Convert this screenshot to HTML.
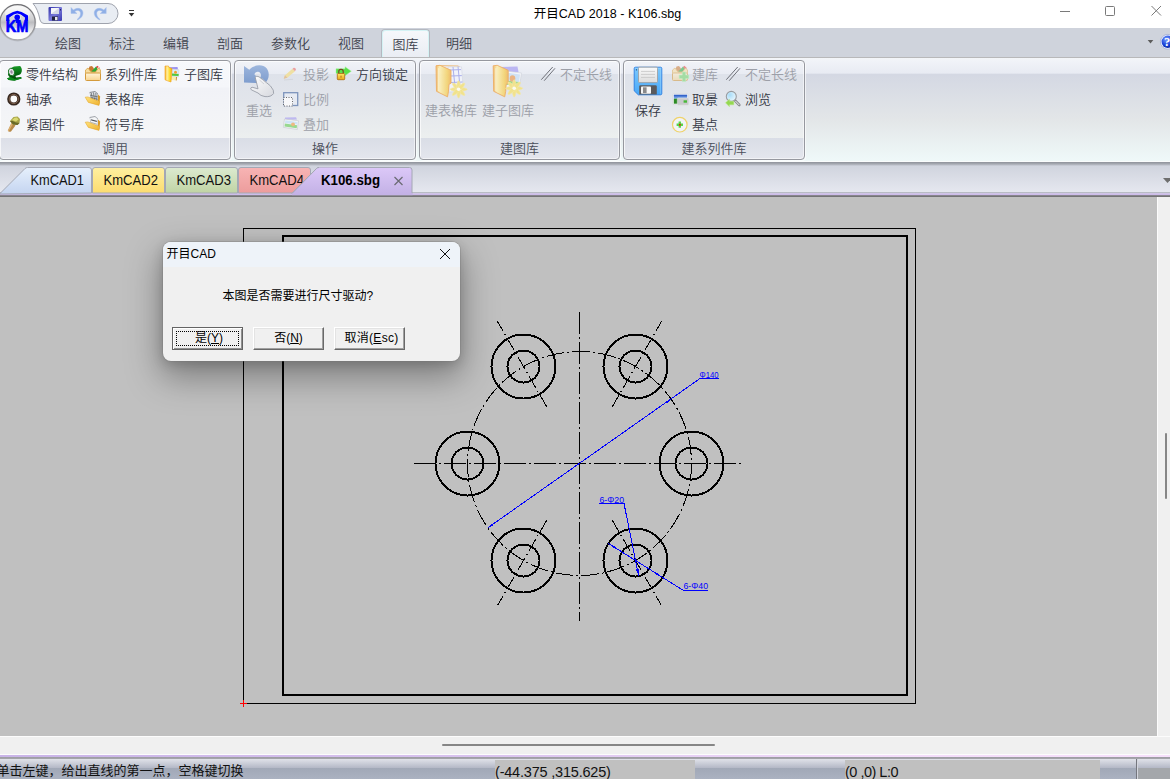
<!DOCTYPE html>
<html lang="zh-CN">
<head>
<meta charset="utf-8">
<title>开目CAD 2018 - K106.sbg</title>
<style>
*{box-sizing:border-box;margin:0;padding:0}
html,body{width:1170px;height:779px;overflow:hidden;background:#c0c0c0}
body{position:relative;font-family:"Liberation Sans","Noto Sans CJK SC",sans-serif;font-size:13px;color:#3c3c46}
.abs{position:absolute}
#titlebar{left:0;top:0;width:1170px;height:28px;background:#fff}
#title{left:0;top:5px;width:1215px;text-align:center;font-size:12.500px;color:#000;line-height:18px;letter-spacing:.05px}
#tabrow{left:0;top:28px;width:1170px;height:30px;background:#cfd3dc}
.rtab{font-weight:350;position:absolute;top:30px;height:28px;line-height:28px;font-size:13px;color:#3e424d;text-align:center}
.rtab.on{top:29px;height:30px;line-height:30px;background:linear-gradient(#f6f8fb,#e9ecf3);border:1px solid #b4b8c0;border-bottom:none;border-radius:4px 4px 0 0;box-shadow:inset 1px 1px 0 #d4f2f4,inset -1px 0 0 #d4f2f4}
#ribbon{left:0;top:57px;width:1170px;height:105px;background:linear-gradient(#f3f5f9 0,#e8ebf3 15px,#d4d8e3 16.500px,#e3e6e8 62px,#eff9f9 100%);border-top:1px solid #b8b8ba;border-bottom:1px solid #fafcfc}
.grp{position:absolute;top:60px;height:100px;border:1px solid #96989f;border-radius:4px;background:linear-gradient(#f1f3f8 0,#e9ecf3 12.500px,#dee2ea 13px,#e2e5eb 40px,#ecefef 76.500px,#d9dde6 77px,#e4e6ed 100%);box-shadow:inset 1px 1px 0 rgba(255,255,255,.7),inset -1px -1px 0 rgba(255,255,255,.5),1px 1px 0 rgba(255,255,255,.6)}
.glabel{font-weight:350;position:absolute;left:0;right:0;bottom:-1px;height:21px;line-height:20px;text-align:center;font-size:13px;color:#4a4e5a}
.it{position:absolute;font-size:13px;line-height:16px;white-space:nowrap;color:#343844;font-weight:350}
.it.dis{color:#9c9fa8}
#doctabs{left:0;top:162px;width:1170px;height:35px;background:linear-gradient(#8e929a 0,#a6aab2 2px,#b9bdc6 3px,#d0d4de 4px,#e6e8f0 31px)}
#canvas{left:0;top:197px;width:1157px;height:539px;background:#c0c0c0}
#vscroll{left:1157px;top:197px;width:13px;height:558px;background:#f0f0f0;border-left:1px solid #fcfcfc}
#hscroll{left:0;top:736px;width:1170px;height:19px;background:#f0f0f0;border-top:1px solid #fcfcfc;border-bottom:1px solid #fcfcfc}
#status{left:0;top:757px;width:1170px;height:22px;background:linear-gradient(#9c9ca2 0,#a4a4aa 1.500px,#e0e2e9 2px,#b6bac8 10.500px,#a1a8b7 11px,#abb2c1 100%)}
.st{color:#111;line-height:18px;white-space:nowrap}
.btn{font-family:'Liberation Sans','Noto Sans CJK SC',sans-serif;background:#f0f0f0;border:1px solid;border-color:#fff #696969 #696969 #fff;box-shadow:inset -1px -1px 0 #a0a0a0,inset 1px 1px 0 #e3e3e3;font-size:12px;color:#000;text-align:center;line-height:20px;white-space:nowrap}
.btn.def{border-color:#646464;box-shadow:inset 1px 1px 0 #fff,inset -1px -1px 0 #909090}
.btn .focus{position:absolute;left:3px;top:3px;right:3px;bottom:3px;border:1px dotted #000}
.btn span{position:relative}
</style>
</head>
<body>
<div id="titlebar" class="abs"></div>
<div id="title" class="abs">开目CAD 2018 - K106.sbg</div>
<div id="tabrow" class="abs"></div>
<div class="rtab" style="left:41px;width:54px">绘图</div>
<div class="rtab" style="left:95px;width:54px">标注</div>
<div class="rtab" style="left:149px;width:54px">编辑</div>
<div class="rtab" style="left:203px;width:54px">剖面</div>
<div class="rtab" style="left:257px;width:67px">参数化</div>
<div class="rtab" style="left:324px;width:54px">视图</div>
<div class="rtab on" style="left:381px;width:49px">图库</div>
<div class="rtab" style="left:432px;width:54px">明细</div>
<!--TITLEBAR_START--><svg class="abs" style="left:0;top:0" width="1170" height="60" viewBox="0 0 1170 60">
<defs>
<linearGradient id="lg1" x1="0" y1="0" x2="0" y2="1"><stop offset="0" stop-color="#f4f4f4"/><stop offset=".42" stop-color="#cfcfd1"/><stop offset=".5" stop-color="#bcbcc0"/><stop offset=".72" stop-color="#e6e6e8"/><stop offset="1" stop-color="#ffffff"/></linearGradient>
<linearGradient id="lgb" x1="0" y1="0" x2="0" y2="1"><stop offset="0" stop-color="#6e6e72"/><stop offset="1" stop-color="#a8a8ac"/></linearGradient>
<linearGradient id="fl" x1="0" y1="0" x2="1" y2="1"><stop offset="0" stop-color="#3030a8"/><stop offset=".5" stop-color="#7878d8"/><stop offset="1" stop-color="#3838b0"/></linearGradient>
<radialGradient id="hp" cx=".4" cy=".3" r=".8"><stop offset="0" stop-color="#7aa0ff"/><stop offset=".6" stop-color="#1840d8"/><stop offset="1" stop-color="#0a208c"/></radialGradient>
</defs>
<!-- QAT pill -->
<path d="M33 3.500 H108 A10 10 0 0 1 108 23.500 H44 Q41 23.500 40 20 Q38 9 33 3.500 Z" fill="#e9edf3" stroke="#9fa3ad" stroke-width="1"/>
<!-- logo -->
<circle cx="17.600" cy="22.600" r="18.800" fill="#000" opacity=".10"/>
<circle cx="17.600" cy="22.300" r="17.600" fill="url(#lg1)" stroke="url(#lgb)" stroke-width="1.300"/>
<ellipse cx="17.600" cy="13" rx="12.500" ry="7" fill="#fff" opacity=".55"/>
<ellipse cx="17.600" cy="33.500" rx="12" ry="5.500" fill="#fff" opacity=".7"/>
<path d="M6.200 15.400 L13 12 L17.300 10.800 L21.600 12 L28 15.400 V21 H24.800 V17.600 L20.800 14.600 L17.300 13.600 L13.800 14.600 L9.500 17.600 V21 H6.200 Z" fill="#0000ff"/>
<path d="M9.600 17.700 L14.300 15 L13.400 19.800 L11 21.500 L9.600 20.500 Z M24.700 17.700 L20.200 15 L21 19.800 L23.300 21.500 L24.700 20.500 Z" fill="#d2d2d6"/>
<circle cx="17.200" cy="17.300" r="2.800" fill="#0000ff"/>
<rect x="15.800" y="19" width="2.800" height="4" fill="#0000ff"/>
<text x="5.700" y="32.100" font-family="'Liberation Sans',sans-serif" font-weight="bold" font-size="16.500" fill="#0000ff" stroke="#0000ff" stroke-width=".7" textLength="22.800" lengthAdjust="spacingAndGlyphs">KM</text>
<!-- save -->
<rect x="48.500" y="7" width="13.500" height="14" rx="1" fill="url(#fl)"/>
<rect x="51" y="8" width="8" height="6" fill="#f4f6fa"/>
<path d="M51 14 L59 8 V14 Z" fill="#c8ccdc" opacity=".7"/>
<rect x="52" y="16.500" width="6" height="4" fill="#20203a"/>
<rect x="55" y="17" width="2.500" height="3.200" fill="#e8e8f0"/>
<rect x="60" y="9" width="1" height="1.500" fill="#20206a"/>
<!-- undo -->
<path d="M71 7.500 V13.500 H77 L74.800 11.400 C77.500 9.500 80.500 10.500 80.500 13.500 C80.500 16 79 18 77 19.600 L78 19.800 C81.500 18 83 15.500 83 13 C83 8.500 77.500 6.800 73.400 9.900 Z" fill="#8fafe6" stroke="#a9c1ec" stroke-width=".5"/>
<!-- redo -->
<path d="M106.200 7.500 V13.500 H100.200 L102.400 11.400 C99.700 9.500 96.700 10.500 96.700 13.500 C96.700 16 98.200 18 100.200 19.600 L99.200 19.800 C95.700 18 94.200 15.500 94.200 13 C94.200 8.500 99.700 6.800 103.800 9.900 Z" fill="#8fafe6" stroke="#a9c1ec" stroke-width=".5"/>
<!-- dropdown -->
<rect x="129" y="10" width="5" height="1" fill="#333"/>
<path d="M128.700 13 H134.300 L131.500 16.500 Z" fill="#333"/>
<!-- window controls -->
<rect x="1060" y="11" width="10" height="1" fill="#7a7a7a"/>
<rect x="1105.500" y="6.500" width="9" height="9" rx="1" fill="none" stroke="#7a7a7a" stroke-width="1"/>
<path d="M1151.500 6 L1161 15.500 M1161 6 L1151.500 15.500" stroke="#7a7a7a" stroke-width="1" fill="none"/>
<!-- ribbon right -->
<path d="M1147.700 40 H1153.300 L1150.500 43.400 Z" fill="#5c5c5c"/>
<circle cx="1167.800" cy="41.800" r="7.400" fill="#eef2ff" stroke="#98a4d0" stroke-width=".7"/>
<circle cx="1167.800" cy="41.800" r="6.200" fill="url(#hp)"/>
<text x="1164" y="46.300" font-family="'Liberation Serif',serif" font-weight="bold" font-size="12.500" fill="#fff">?</text>
</svg>
<!--TITLEBAR_END-->
<div id="ribbon" class="abs"></div>
<div class="grp" style="left:-1px;width:232px;background:linear-gradient(#f7f8fb 0,#f5f6fa 26px,#f1f2f7 27px,#f5f6f7 76.500px,#dcdfe8 77px,#e7e9ef 100%)"><div class="glabel">调用</div></div>
<div class="grp" style="left:234px;width:182px"><div class="glabel">操作</div></div>
<div class="grp" style="left:419px;width:201px"><div class="glabel">建图库</div></div>
<div class="grp" style="left:623px;width:182px"><div class="glabel">建系列件库</div></div>
<!-- group 1 items -->
<div class="it" style="left:26px;top:67px">零件结构</div>
<div class="it" style="left:26px;top:92px">轴承</div>
<div class="it" style="left:26px;top:117px">紧固件</div>
<div class="it" style="left:105px;top:67px">系列件库</div>
<div class="it" style="left:105px;top:92px">表格库</div>
<div class="it" style="left:105px;top:117px">符号库</div>
<div class="it" style="left:184px;top:67px">子图库</div>
<!-- group 2 items -->
<div class="it dis" style="left:246px;top:103px">重选</div>
<div class="it dis" style="left:303px;top:67px">投影</div>
<div class="it dis" style="left:303px;top:92px">比例</div>
<div class="it dis" style="left:303px;top:117px">叠加</div>
<div class="it" style="left:356px;top:67px">方向锁定</div>
<!-- group 3 items -->
<div class="it dis" style="left:425px;top:103px">建表格库</div>
<div class="it dis" style="left:482px;top:103px">建子图库</div>
<div class="it dis" style="left:560px;top:67px">不定长线</div>
<!-- group 4 items -->
<div class="it" style="left:635px;top:103px">保存</div>
<div class="it dis" style="left:692px;top:67px">建库</div>
<div class="it dis" style="left:745px;top:67px">不定长线</div>
<div class="it" style="left:692px;top:92px">取景</div>
<div class="it" style="left:745px;top:92px">浏览</div>
<div class="it" style="left:692px;top:117px">基点</div>
<!--ICONS_START--><svg class="abs" style="left:0;top:58px" width="810" height="104" viewBox="0 58 810 104">
<defs>
<linearGradient id="gcy" x1="0" y1="0" x2="0" y2="1"><stop offset="0" stop-color="#1a9a28"/><stop offset=".5" stop-color="#066a12"/><stop offset="1" stop-color="#03400a"/></linearGradient>
<linearGradient id="fold" x1="0" y1="0" x2="1" y2="1"><stop offset="0" stop-color="#ffe27a"/><stop offset="1" stop-color="#eeb030"/></linearGradient>
<linearGradient id="foldv" x1="0" y1="0" x2="1" y2="0"><stop offset="0" stop-color="#f8b020"/><stop offset=".3" stop-color="#fff0a0"/><stop offset=".7" stop-color="#ffd820"/><stop offset="1" stop-color="#f0a818"/></linearGradient>
<linearGradient id="box" x1="0" y1="0" x2="0" y2="1"><stop offset="0" stop-color="#fff4d8"/><stop offset="1" stop-color="#f8d490"/></linearGradient>
</defs>
<!-- 零件结构 -->
<g>
<path d="M9 80 L14.500 80.500 L21.500 78.500 L21 77 L16 77.500 L15.500 76 L20 74.500 C22.500 72.500 22.500 68 20 66 L14 66.500 L9 69 L8 75 L10 77.500 L7 78.500 Z" fill="url(#gcy)"/>
<path d="M7 78.300 L10.500 77 L15 79 L21.500 77.200 L21.500 78.600 L14.500 80.700 L8.500 80 Z" fill="#0b8a1a"/>
<ellipse cx="11.500" cy="72" rx="3" ry="3.800" fill="#e8e8ec" stroke="#0a6a14" stroke-width=".8" transform="rotate(-15 11.500 72)"/>
<ellipse cx="11.500" cy="72" rx="1.200" ry="1.800" fill="#9a8aa0" transform="rotate(-15 11.500 72)"/>
</g>
<!-- 轴承 -->
<circle cx="13.800" cy="99" r="5" fill="#fdfdfd" stroke="#35261e" stroke-width="3.200"/>
<circle cx="13.800" cy="99" r="4.600" fill="none" stroke="#8a6a54" stroke-width=".9"/>
<!-- 紧固件 -->
<path d="M11.500 123 L15.500 125.500 L11 131.500 Q9 132.500 7.800 130.800 Z" fill="#b88a48"/>
<path d="M11.500 123 L13 124 L8.800 131.300 Q8 131 7.800 130.800 Z" fill="#dcb070"/>
<path d="M10 121 L13.500 117 L17.500 116.500 L20 119 L19.500 123 L17.500 125 L13 124.500 Z" fill="#a8a448"/>
<path d="M12 120 L14.500 117.800 L17 117.500 L18.500 119.500 L16 121.500 Z" fill="#d8d870"/>
<path d="M10 121 L13 124.500 L17.500 125 L19.500 123 L16 122.500 L12.500 121 Z" fill="#6a6a28"/>
<!-- 系列件库 -->
<path d="M88 71 L89.500 66.500 L92 66 L94 68.500 L93.500 72 Z" fill="#c87832"/>
<path d="M91 72 L96 66.500 L98.500 68 L95.500 73 Z" fill="#28a838"/>
<path d="M96 67 L97.500 65.800 L99.800 68 L98.800 70 Z" fill="#e84040"/>
<path d="M97 68.200 L98.500 67 L99.500 68.500 L98.300 69.600 Z" fill="#fff"/>
<path d="M85.500 70 L88 68 L91 72 L95.500 72 L98.500 68 L100.500 70 L100.500 73.500 H85.500 Z" fill="#f6dca0" stroke="#d8a448" stroke-width=".8"/>
<rect x="85.500" y="73" width="15" height="7.500" rx="1" fill="url(#box)" stroke="#d49a3c" stroke-width="1"/>
<!-- 表格库 -->
<g>
<path d="M89.500 92 L95 91 L98 93.500 L98.500 103 L91 100 Z" fill="#8a8e94"/>
<path d="M90 93 L95 92 L97.500 94 L97.800 101.500 L91.500 99 Z" fill="#dfe2e6"/>
<path d="M91.300 93 L92.500 99.500 M93.500 92.500 L94.500 100.300 M95.800 93 L96.300 101 M90.300 95.300 L97.600 96.800 M90.800 97.500 L97.700 99.300" stroke="#555a60" stroke-width=".7" fill="none"/>
<path d="M98 94.500 L100.200 96.500 L99.300 104.500 L98 103 Z" fill="#d89a28"/>
<path d="M85.200 97.200 L87.800 96.900 L99.600 101.400 L99 105.400 L88.300 102.400 Z" fill="url(#fold)" stroke="#e0a020" stroke-width=".5"/>
</g>
<!-- 符号库 -->
<g transform="translate(0 25)">
<path d="M89.500 92 L95 91 L98 93.500 L98.500 103 L91 100 Z" fill="#a0a4aa"/>
<path d="M90 93 L95 92 L97.500 94 L97.800 101.500 L91.500 99 Z" fill="#f4f5f7"/>
<path d="M91 94.200 L96.800 95.800 L96.900 97 L91.200 95.500 Z" fill="#50545a"/>
<path d="M91.300 97.500 L97.300 99.300" stroke="#8a8e94" stroke-width=".7" fill="none"/>
<path d="M98 94.500 L100.200 96.500 L99.300 104.500 L98 103 Z" fill="#d89a28"/>
<path d="M85.200 97.200 L87.800 96.900 L99.600 101.400 L99 105.400 L88.300 102.400 Z" fill="url(#fold)" stroke="#e0a020" stroke-width=".5"/>
</g>
<!-- 子图库 -->
<g>
<path d="M169 67.200 L177.500 67 L178 69.500 L169 70 Z" fill="#9a90f0"/>
<path d="M172 69 L179 69.800 L178.500 77 L172 76.500 Z" fill="#d8ecf8" stroke="#c8ccd4" stroke-width=".5"/>
<path d="M172 73.500 L178.700 74 L178.500 76 L172 75.800 Z" fill="#50c840"/>
<circle cx="175.500" cy="72.300" r="1.500" fill="#f0a030"/>
<path d="M171 76.500 L177 77 L176.500 80.500 L171 80 Z" fill="#f8eeb0"/>
<path d="M176 77 L177 77.100 L176.600 80.500 L175.800 80.400 Z" fill="#c88838"/>
<path d="M165 66 L168.500 66 L169 67.500 L172 68.500 L171.500 75 L171 82 L168 81 L165 79.800 Z" fill="url(#foldv)" stroke="#f0a020" stroke-width=".6"/>
</g>
<defs>
<linearGradient id="arw" x1="0" y1="0" x2="0" y2="1"><stop offset="0" stop-color="#9db6dd"/><stop offset="1" stop-color="#7d9ccd"/></linearGradient>
<linearGradient id="hand" x1="0" y1="0" x2="1" y2="1"><stop offset="0" stop-color="#ffffff"/><stop offset="1" stop-color="#d6d8de"/></linearGradient>
<linearGradient id="fdis" x1="0" y1="0" x2="1" y2="0"><stop offset="0" stop-color="#f2b860"/><stop offset=".25" stop-color="#fbeeb4"/><stop offset=".75" stop-color="#f5d470"/><stop offset="1" stop-color="#f0b860"/></linearGradient>
<linearGradient id="flp" x1="0" y1="0" x2="0" y2="1"><stop offset="0" stop-color="#7cc8fc"/><stop offset="1" stop-color="#48a8f8"/></linearGradient>
<linearGradient id="lbl" x1="0" y1="0" x2="0" y2="1"><stop offset="0" stop-color="#fafafa"/><stop offset="1" stop-color="#dcdcdc"/></linearGradient>
<linearGradient id="gold" x1="0" y1="0" x2="0" y2="1"><stop offset="0" stop-color="#ffe868"/><stop offset="1" stop-color="#e8a818"/></linearGradient>
<linearGradient id="sky" x1="0" y1="0" x2="0" y2="1"><stop offset="0" stop-color="#1c4cc0"/><stop offset="1" stop-color="#9cc4f4"/></linearGradient>
<radialGradient id="lens" cx=".35" cy=".35" r=".8"><stop offset="0" stop-color="#a8dcf8"/><stop offset="1" stop-color="#f4fbff"/></radialGradient>
</defs>
<!-- 重选 -->
<path d="M244 66 L249.300 69.800 C253 65 262.500 63.200 266.800 68.500 C270 73 269.300 79.500 264.500 83.500 L258 80 C261.500 78 262 73.500 259 72 C256.800 71 255 72.500 254.300 74.300 L258.500 78.500 L257 83 L244 82.500 Z" fill="url(#arw)"/>
<path d="M255.200 77.300 Q256.500 75.300 259 76.800 L266.500 82.600 L270.500 86 Q274.500 90.500 273.600 93.500 Q271 97.200 265 96.600 Q260.500 96 258 93 L251.300 89.800 Q249.600 87.800 252 87.200 L258 88.800 L257 84.500 Z" fill="url(#hand)" stroke="#9a9ea8" stroke-width=".9"/>
<path d="M259.500 80 L264 84 M262 78.600 L267 83.500" stroke="#c4c6cc" stroke-width=".7" fill="none"/>
<!-- 投影 pencil -->
<path d="M283.700 78.800 L285 75.300 L292.500 68.800 L295 71.200 L287.300 77.800 Z" fill="#efe0a4"/>
<path d="M292.500 68.800 L293.800 67.800 Q295.500 67.500 296 69.500 L295 71.200 Z" fill="#eba0a0"/>
<path d="M283.700 78.800 L285 75.300 L287.300 77.800 Z" fill="#e0c0a0"/>
<path d="M284 80 L293 79.300" stroke="#d4d6dc" stroke-width="1" fill="none"/>
<!-- 比例 -->
<rect x="283.700" y="92.700" width="14" height="12.800" fill="#e6eaf2" stroke="#7d94bc" stroke-width="1.300"/>
<rect x="283.500" y="97.500" width="9" height="8.500" fill="#f8f8fa" stroke="#4a4a4a" stroke-width=".8" stroke-dasharray="1 1.500"/>
<!-- 叠加 -->
<path d="M285 117.500 L296 117.300 L297 119.500 L285 120 Z" fill="#b4acf0" opacity=".8"/>
<path d="M284.500 119 L298.500 120.800 L297.300 129.500 L283.300 127.300 Z" fill="#f4f6f8" stroke="#c4c6cc" stroke-width=".6"/>
<path d="M285.300 120.300 L297.600 121.900 L297.200 124.500 L285 123 Z" fill="#cfe4f6"/>
<path d="M284.900 123.600 L297.100 125.200 L296.700 128.300 L284.400 126.400 Z" fill="#98d890"/>
<circle cx="293" cy="124.300" r="1.900" fill="#eeb880"/>
<!-- 方向锁定 -->
<path d="M336 68.800 H345 V66.800 L351.300 71.200 L345 75.700 V73.500 H336 Z" fill="#58e048" stroke="#a8f0a0" stroke-width=".5"/>
<path d="M338.800 74 V71.500 Q338.800 69.200 341 69.200 Q343.200 69.200 343.200 71.500 V74" fill="none" stroke="#7a3a22" stroke-width="1.100"/>
<rect x="337.300" y="73.500" width="7.400" height="6.200" rx=".8" fill="url(#gold)" stroke="#a8680c" stroke-width=".8"/>
<rect x="340.300" y="75.700" width="1.400" height="2" fill="#c08a20"/>
<!-- 建表格库 -->
<g opacity=".9">
<path d="M436.500 65.600 L458 66 L460.500 67.500" fill="none" stroke="#f0b468" stroke-width="1"/>
<path d="M448 67 L461.500 66.800 L463.500 91 L449 92 Z" fill="#f2f4fb" stroke="#d0d4e0" stroke-width=".6"/>
<path d="M450 70 L461 69.600 M450.500 76 L461.800 75.600 M451 82.500 L462.500 82 M453 67 L455.500 92 M458 66.500 L460.500 92" stroke="#a6abec" stroke-width="1" fill="none"/>
<g transform="translate(436 65.300)"><path d="M0 0.500 L4 0 L15 5 L15 18 L13 19 L12.500 26 L11.500 31.500 L0.500 26 Z" fill="url(#fdis)" stroke="#eea858" stroke-width=".9" stroke-linejoin="round"/><path d="M2.200 3 L3.200 2.600 L3.200 26 L2.200 25.600 Z" fill="#fff8d8" opacity=".8"/></g>
<g transform="translate(458.600 89.300)"><g fill="#f3e283" stroke="#f7eaa0" stroke-width=".6"><ellipse cx="0" cy="0" rx="8.600" ry="2"/><ellipse cx="0" cy="0" rx="8.600" ry="2" transform="rotate(45)"/><ellipse cx="0" cy="0" rx="8.600" ry="2" transform="rotate(90)"/><ellipse cx="0" cy="0" rx="8.600" ry="2" transform="rotate(135)"/></g><circle r="1.800" fill="#fffdf0"/></g>
</g>
<!-- 建子图库 -->
<g opacity=".9">
<path d="M500 67 L517.500 66.500 L518.500 72 L500.500 73 Z" fill="#b6b0f2"/>
<path d="M503 70.500 L521.500 73 L519 90 L503 87 Z" fill="#f5f7fa" stroke="#ccd0d8" stroke-width=".6"/>
<path d="M505 72.300 L520 74.400 L519 82 L505 80.500 Z" fill="#cfe3f6"/>
<path d="M505 80.500 L519 82 L518.300 86.500 L505 84.500 Z" fill="#98d884"/>
<ellipse cx="512.500" cy="78.500" rx="2.800" ry="3.300" fill="#ecb078"/>
<g transform="translate(493.200 65.300)"><path d="M0 0.500 L4 0 L15 5 L15 18 L13 19 L12.500 26 L11.500 31.500 L0.500 26 Z" fill="url(#fdis)" stroke="#eea858" stroke-width=".9" stroke-linejoin="round"/><path d="M2.200 3 L3.200 2.600 L3.200 26 L2.200 25.600 Z" fill="#fff8d8" opacity=".8"/></g>
<g transform="translate(514.200 88.300)"><g fill="#f3e283" stroke="#f7eaa0" stroke-width=".6"><ellipse cx="0" cy="0" rx="8.600" ry="2"/><ellipse cx="0" cy="0" rx="8.600" ry="2" transform="rotate(45)"/><ellipse cx="0" cy="0" rx="8.600" ry="2" transform="rotate(90)"/><ellipse cx="0" cy="0" rx="8.600" ry="2" transform="rotate(135)"/></g><circle r="1.800" fill="#fffdf0"/></g>
</g>
<!-- 不定长线 x2 (disabled) -->
<path d="M541.300 79.700 L552.700 67 M544.200 80.700 L555 68.300" stroke="#6e7078" stroke-width="1" fill="none"/>
<path d="M726.300 79.700 L737.700 67 M729.200 80.700 L740 68.300" stroke="#6e7078" stroke-width="1" fill="none"/>
<!-- 保存 -->
<path d="M635.500 67.200 H660.500 Q661.800 67.200 661.800 68.500 V93.500 Q661.800 94.800 660.500 94.800 H638.300 L634.200 90.800 V68.500 Q634.200 67.200 635.500 67.200 Z" fill="url(#flp)" stroke="#2a7ce0" stroke-width=".9"/>
<path d="M635.300 68.300 H660.700 V93.700" fill="none" stroke="#a8dcff" stroke-width=".6" opacity=".8"/>
<rect x="638.500" y="67.200" width="19" height="15.400" rx="1.200" fill="url(#lbl)" stroke="#9c9c9c" stroke-width=".8"/>
<path d="M641 71.400 H655 M641 74.400 H655 M641 77.400 H655" stroke="#c4c4c4" stroke-width=".8"/>
<path d="M639.200 86.500 Q639.200 85.200 640.500 85.200 H655.500 Q656.800 85.200 656.800 86.500 V94.600 H639.200 Z" fill="#5a5a5c"/>
<rect x="641" y="86.500" width="10" height="7.200" rx=".8" fill="#f6f6f6"/>
<rect x="643" y="87.300" width="3.600" height="5.800" fill="#8a8a8a"/>
<rect x="635.900" y="69" width=".9" height="1.600" fill="#2a5890"/>
<!-- 建库 (disabled) -->
<g opacity=".55">
<path d="M675 71 L676.500 66.500 L679 66 L681 68.500 L680.500 72 Z" fill="#c87832"/>
<path d="M678 72 L683 66.500 L685.500 68 L682.500 73 Z" fill="#28a838"/>
<path d="M683 67 L684.500 65.800 L686.800 68 L685.800 70 Z" fill="#e84040"/>
<path d="M672.500 70 L675 68 L678 72 L682.500 72 L685.500 68 L687.500 70 L687.500 73.500 H672.500 Z" fill="#f6dca0" stroke="#d8a448" stroke-width=".8"/>
<rect x="672.500" y="73" width="15" height="7.500" rx="1" fill="url(#box)" stroke="#d49a3c" stroke-width="1"/>
</g>
<path d="M682.300 72 H685.700 V75.100 H688.800 V78.500 H685.700 V81.600 H682.300 V78.500 H679.200 V75.100 H682.300 Z" fill="#a4dca4" stroke="#c4ecc4" stroke-width=".6"/>
<!-- 取景 -->
<rect x="672.700" y="93.600" width="15.600" height="11" rx="1.200" fill="#fafafa" stroke="#d0d2d6" stroke-width=".6"/>
<rect x="673.800" y="94.700" width="13.400" height="4.200" fill="url(#sky)"/>
<rect x="673.800" y="98.700" width="5" height="5" fill="#2c8a24"/>
<rect x="677.300" y="98" width="11.500" height="7.200" rx="1" fill="#c9cacc" stroke="#e8e8ea" stroke-width=".5"/>
<rect x="683.600" y="100.300" width="3.400" height="2.400" fill="#48b838"/>
<!-- 基点 -->
<circle cx="679.800" cy="124.700" r="7.300" fill="#f2f3f7" stroke="#efd36a" stroke-width="1.200"/>
<path d="M678.600 121.600 H681 V123.500 H683 V125.900 H681 V127.800 H678.600 V125.900 H676.600 V123.500 H678.600 Z" fill="#58d848"/>
<rect x="679" y="123.900" width="1.700" height="1.700" fill="#f01010"/>
<!-- 浏览 -->
<path d="M735 100.500 L739.300 105" stroke="#8a8c90" stroke-width="2.600" stroke-linecap="round" fill="none"/>
<path d="M735.600 101.200 L739 104.700" stroke="#eceef0" stroke-width="1" stroke-linecap="round" fill="none"/>
<circle cx="731.300" cy="96.400" r="5" fill="url(#lens)" stroke="#9a9ca0" stroke-width="1.100"/>
<path d="M725.500 102.800 L729.500 99.300 V101.300 H733.800 V104.800 H729.500 V106.800 Z" fill="#94d850" stroke="#b8e888" stroke-width=".5"/>

</svg>
<!--ICONS_END-->

<div id="doctabs" class="abs"></div>
<!--DOCTABS_START--><svg class="abs" style="left:0;top:162px" width="1170" height="35" viewBox="0 0 1170 35">
<defs>
<linearGradient id="tb1" x1="0" y1="0" x2="0" y2="1"><stop offset="0" stop-color="#e6f0fc"/><stop offset="1" stop-color="#c4d4f0"/></linearGradient>
<linearGradient id="tb2" x1="0" y1="0" x2="0" y2="1"><stop offset="0" stop-color="#fff0a0"/><stop offset="1" stop-color="#fcdc70"/></linearGradient>
<linearGradient id="tb3" x1="0" y1="0" x2="0" y2="1"><stop offset="0" stop-color="#dcead0"/><stop offset="1" stop-color="#c0d4a4"/></linearGradient>
<linearGradient id="tb4" x1="0" y1="0" x2="0" y2="1"><stop offset="0" stop-color="#f8b4b4"/><stop offset="1" stop-color="#ec9c9c"/></linearGradient>
<linearGradient id="tb5" x1="0" y1="0" x2="0" y2="1"><stop offset="0" stop-color="#dcc8f8"/><stop offset="1" stop-color="#c4b2e6"/></linearGradient>
</defs>
<rect x="0" y="30.300" width="1170" height="1" fill="#a6aab2"/>
<rect x="0" y="31.300" width="1170" height="2.200" fill="#cdbcea"/>
<rect x="0" y="33.200" width="1170" height="1.800" fill="#747476"/>
<path d="M-0.500 32 L25 6.500 Q26 5.500 27.500 5.500 H89 Q91.500 5.500 91.500 8 V31 Z" fill="url(#tb1)" stroke="#a4a8b4" stroke-width="1"/>
<path d="M92.500 31 V8 Q92.500 5.500 95 5.500 H162 Q164.500 5.500 164.500 8 V31 Z" fill="url(#tb2)" stroke="#a4a8b4" stroke-width="1"/>
<path d="M165.500 31 V8 Q165.500 5.500 168 5.500 H235 Q237.500 5.500 237.500 8 V31 Z" fill="url(#tb3)" stroke="#a4a8b4" stroke-width="1"/>
<path d="M238.500 31 V8 Q238.500 5.500 241 5.500 H308 Q310.500 5.500 310.500 8 V31 Z" fill="url(#tb4)" stroke="#a4a8b4" stroke-width="1"/>
<path d="M292 31.500 L316.500 6.500 Q317.500 5.500 319 5.500 H409.500 Q412 5.500 412 8 V31.500 Z" fill="url(#tb5)" stroke="#a4a8b4" stroke-width="1"/>
<rect x="292" y="31" width="120.500" height="2.200" fill="#c4b2e6"/>
<path d="M394.500 15 l8 8 m0 -8 l-8 8" stroke="#6a6a72" stroke-width="1.200" fill="none"/>
<path d="M1163 16 h9 l-4.500 5 z" fill="#6e6e6e"/>
<g font-family="'Liberation Sans','Noto Sans CJK SC',sans-serif" font-size="14" fill="#111">
<text x="30.500" y="23" textLength="53.500" lengthAdjust="spacingAndGlyphs">KmCAD1</text>
<text x="103.500" y="23" textLength="54.500" lengthAdjust="spacingAndGlyphs">KmCAD2</text>
<text x="176.500" y="23" textLength="54.500" lengthAdjust="spacingAndGlyphs">KmCAD3</text>
<text x="249.500" y="23" textLength="54.500" lengthAdjust="spacingAndGlyphs">KmCAD4</text>
</g>
<path d="M292 31.500 L316.500 6.500 Q317.500 5.500 319 5.500 H340 V31.500 Z" fill="url(#tb5)"/>
<path d="M292 31.500 L316.500 6.500 Q317.500 5.500 319 5.500" fill="none" stroke="#a4a8b4"/>
<text x="321" y="23" font-family="'Liberation Sans','Noto Sans CJK SC',sans-serif" font-size="14" font-weight="bold" fill="#000" textLength="59" lengthAdjust="spacingAndGlyphs">K106.sbg</text>
</svg>
<!--DOCTABS_END-->
<div id="canvas" class="abs"></div>
<!--DRAWING_START--><svg class="abs" style="left:0;top:197px" width="1157" height="539" viewBox="0 197 1157 539" shape-rendering="crispEdges">
<rect x="243.500" y="228.500" width="672" height="475" fill="none" stroke="#000" stroke-width="1"/>
<rect x="283" y="236" width="624" height="459" fill="none" stroke="#000" stroke-width="2"/>
<path d="M240 703.500 h7 M243.500 700 v7" stroke="#f00" stroke-width="1" fill="none"/>
<g stroke="#000" stroke-width="1" fill="none" stroke-dasharray="22 3 2 3">
<path d="M414 463.5 H743"/>
<path d="M579.5 312 V621"/>
<circle cx="579.5" cy="463.5" r="112" stroke-dasharray="18 3 2 3"/>
<path d="M612.0 407.2 L661.5 321.5" stroke-dasharray="14 3 2 3"/>
<path d="M547.0 407.2 L497.5 321.5" stroke-dasharray="14 3 2 3"/>
<path d="M547.0 519.8 L497.5 605.5" stroke-dasharray="14 3 2 3"/>
<path d="M612.0 519.8 L661.5 605.5" stroke-dasharray="14 3 2 3"/>
</g>
<g stroke="#000" stroke-width="2" fill="none">
<circle cx="691.5" cy="463.5" r="32"/><circle cx="691.5" cy="463.5" r="16"/>
<circle cx="635.5" cy="366.5" r="32"/><circle cx="635.5" cy="366.5" r="16"/>
<circle cx="523.5" cy="366.5" r="32"/><circle cx="523.5" cy="366.5" r="16"/>
<circle cx="467.5" cy="463.5" r="32"/><circle cx="467.5" cy="463.5" r="16"/>
<circle cx="523.5" cy="560.5" r="32"/><circle cx="523.5" cy="560.5" r="16"/>
<circle cx="635.5" cy="560.5" r="32"/><circle cx="635.5" cy="560.5" r="16"/>
</g>
<g stroke="#0000ff" stroke-width="1" fill="none">
<path d="M487.8 527.8 L700 378.500 H719"/>
<path d="M671.2 399.2 L667.0 403.6 L665.6 401.6 Z" fill="#0000ff" stroke="none"/>
<path d="M487.8 527.8 L492.0 523.4 L493.4 525.4 Z" fill="#0000ff" stroke="none"/>
<path d="M599 503.500 H624 L638.7 576.2"/>
<path d="M638.7 576.2 L636.0 569.6 L638.6 569.1 Z" fill="#0000ff" stroke="none"/>
<path d="M708 590.500 H683.500 L608.4 543.5"/>
<path d="M608.4 543.5 L615.0 546.1 L613.6 548.3 Z" fill="#0000ff" stroke="none"/>
<path d="M662.6 577.5 L656.0 574.8 L657.4 572.6 Z" fill="#0000ff" stroke="none"/>
</g>
<g font-family="'Liberation Sans',sans-serif" font-size="8.500" fill="#0000ff">
<text x="699.500" y="377.500" textLength="19" lengthAdjust="spacingAndGlyphs">Φ140</text>
<text x="599.500" y="502.500" textLength="24.500" lengthAdjust="spacingAndGlyphs">6-Φ20</text>
<text x="683.500" y="589" textLength="24.500" lengthAdjust="spacingAndGlyphs">6-Φ40</text>
</g>
</svg><!--DRAWING_END-->
<div id="vscroll" class="abs"></div>
<div id="hscroll" class="abs"></div>
<div id="status" class="abs"></div>
<!--STATUS_START--><div class="abs" style="left:442px;top:744px;width:273px;height:2px;background:#868686;border-radius:1px"></div>
<div class="abs" style="left:1165px;top:433px;width:2px;height:66px;background:#868686;border-radius:1px"></div>
<div class="abs" style="left:0;top:755px;width:1170px;height:2px;background:linear-gradient(90deg,#c9b4e8 0,#d8c2ee 40%,#f3dcfa 75%,#f6e0fb 100%)"></div>
<div class="abs" style="left:495px;top:760px;width:200px;height:19px;background:#c0c0c0"></div>
<div class="abs" style="left:845px;top:760px;width:255px;height:19px;background:#c0c0c0"></div>
<div class="abs" style="left:1137px;top:768px;width:33px;height:11px;background:#a4a7ab"></div>
<div class="abs" style="left:1136px;top:759px;width:1px;height:20px;background:#74767e"></div>
<div class="abs" style="left:1137px;top:759px;width:1px;height:20px;background:#d4d6de"></div>
<div class="abs st" style="left:-3.500px;top:762px;font-size:13px">单击左键，给出直线的第一点，空格键切换</div>
<div class="abs st" style="left:495px;top:763px;font-size:14.500px;letter-spacing:-0.2px">(-44.375 ,315.625)</div>
<div class="abs st" style="left:845px;top:763px;font-size:14.500px;letter-spacing:-0.5px">(0 ,0) L:0</div>
<!--STATUS_END-->
<!--DIALOG_START--><div class="abs" id="dlg" style="left:163px;top:242px;width:297px;height:119px;border-radius:8px;background:#f0f0f0;box-shadow:0 0 0 1px rgba(120,120,120,.30),0 14px 34px 3px rgba(0,0,0,.34),0 3px 12px rgba(0,0,0,.16);overflow:hidden">
<div style="position:absolute;left:0;top:0;width:297px;height:25px;background:#eef3f9"></div>
</div>
<div class="abs" style="left:166.500px;top:246px;font-size:12px;line-height:16px;color:#000;white-space:nowrap">开目CAD</div>
<svg class="abs" style="left:439px;top:248px" width="12" height="12" viewBox="0 0 12 12"><path d="M1 1 L11 11 M11 1 L1 11" stroke="#111" stroke-width="1" fill="none"/></svg>
<div class="abs" style="left:222.500px;top:288px;font-family:'Liberation Sans','Noto Sans CJK SC',sans-serif;font-size:12px;line-height:16px;color:#000;white-space:nowrap;letter-spacing:0px">本图是否需要进行尺寸驱动?</div>
<div class="abs btn def" style="left:172px;top:327px;width:71px;height:23px"><div class="focus"></div><span style="left:1.500px">是(<u>Y</u>)</span></div>
<div class="abs btn" style="left:253px;top:327px;width:71px;height:23px"><span>否(<u>N</u>)</span></div>
<div class="abs btn" style="left:334px;top:327px;width:71px;height:23px"><span style="letter-spacing:.3px;left:2px">取消(<u>E</u>sc)</span></div>
<!--DIALOG_END-->
</body>
</html>
